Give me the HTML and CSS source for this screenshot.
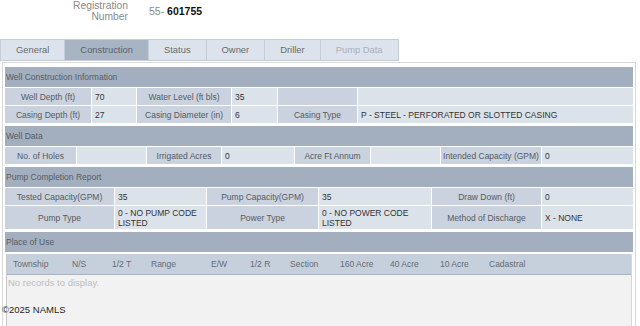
FILE: index.html
```html
<!DOCTYPE html>
<html lang="en">
<head>
    <meta charset="UTF-8">
    <meta name="viewport" content="width=device-width, initial-scale=1.0">
    <title>Well Registration</title>
    <link rel="stylesheet" href="styles.css">
</head>
<body>
    <div class="reg">
        <div class="reg-label">Registration<br>Number</div>
        <div class="reg-value">55- <strong>601755</strong></div>
    </div>

    <!-- Tabs -->
    <div class="tabs">
        <div class="tab">General</div>
        <div class="tab active">Construction</div>
        <div class="tab">Status</div>
        <div class="tab">Owner</div>
        <div class="tab">Driller</div>
        <div class="tab disabled">Pump Data</div>
    </div>

    <div class="panel">
        <div class="section">
            <div class="section-title">Well Construction Information</div>
            <div class="info info-construction">
                <div class="lbl">Well Depth (ft)</div>
                <div class="val">70</div>
                <div class="lbl">Water Level (ft bls)</div>
                <div class="val">35</div>
                <div class="lbl"></div>
                <div class="val"></div>

                <div class="lbl">Casing Depth (ft)</div>
                <div class="val">27</div>
                <div class="lbl">Casing Diameter (in)</div>
                <div class="val">6</div>
                <div class="lbl">Casing Type</div>
                <div class="val">P - STEEL - PERFORATED OR SLOTTED CASING</div>
            </div>
        </div>

        <div class="section">
            <div class="section-title">Well Data</div>
            <div class="info info-well">
                <div class="lbl">No. of Holes</div>
                <div class="val"></div>
                <div class="lbl">Irrigated Acres</div>
                <div class="val">0</div>
                <div class="lbl">Acre Ft Annum</div>
                <div class="val"></div>
                <div class="lbl">Intended Capacity (GPM)</div>
                <div class="val">0</div>
            </div>
        </div>

        <div class="section">
            <div class="section-title">Pump Completion Report</div>
            <div class="info info-pump">
                <div class="lbl">Tested Capacity(GPM)</div>
                <div class="val">35</div>
                <div class="lbl">Pump Capacity(GPM)</div>
                <div class="val">35</div>
                <div class="lbl">Draw Down (ft)</div>
                <div class="val">0</div>

                <div class="lbl">Pump Type</div>
                <div class="val wrap">0 - NO PUMP CODE LISTED</div>
                <div class="lbl">Power Type</div>
                <div class="val wrap">0 - NO POWER CODE LISTED</div>
                <div class="lbl">Method of Discharge</div>
                <div class="val">X - NONE</div>
            </div>
        </div>

        <div class="section last">
            <div class="section-title">Place of Use</div>
            <div class="grid">
                <div class="grid-head">
                    <span>Township</span>
                    <span>N/S</span>
                    <span>1/2 T</span>
                    <span>Range</span>
                    <span>E/W</span>
                    <span>1/2 R</span>
                    <span>Section</span>
                    <span>160 Acre</span>
                    <span>40 Acre</span>
                    <span>10 Acre</span>
                    <span>Cadastral</span>
                </div>
                <div class="grid-body">No records to display.</div>
            </div>
        </div>
    </div>

    <div class="copyright">&copy;2025 NAMLS</div>
</body>
</html>
```

FILE: styles.css
```css
body {
    margin: 0;
    font-family: "Liberation Sans", Arial, sans-serif;
    background: #fff;
    overflow: hidden;
}
.reg {
    display: flex;
    height: 22px;
}
.reg-label {
    width: 128px;
    text-align: right;
    font-size: 10.3px;
    line-height: 11px;
    color: #8a8a8a;
}
.reg-value {
    margin-left: 21px;
    padding-top: 5px;
    font-size: 10.5px;
    line-height: 12px;
    color: #8a8a8a;
}
.reg-value strong {
    color: #111;
}
.tabs {
    display: flex;
    margin-top: 17px;
}
.tab {
    height: 20px;
    line-height: 20px;
    padding: 0 15px;
    font-size: 9.4px;
    color: #6a6a6a;
    background: #dde3ec;
    border: 1px solid #c4ccd7;
    border-left: none;
}
.tab:first-child {
    border-left: 1px solid #c4ccd7;
}
.tab.active {
    background: #a8b4c4;
    color: #59606a;
}
.tab.disabled {
    color: #a9afb8;
}
.panel {
    margin: 1px 4px 0 2px;
    padding: 4px 2px 0 2px;
    border: 1px solid #d8d8d8;
    border-bottom: none;
}
.section {
    margin-bottom: 3px;
}
.section.last {
    margin-bottom: 0;
}
.section-title {
    height: 20px;
    line-height: 20px;
    padding-left: 1px;
    font-size: 8.5px;
    color: #555c66;
    background: #a3afbf;
}
.info {
    display: grid;
    gap: 1px;
    padding-top: 1px;
    background: #fff;
    font-size: 8.5px;
}
.info-construction {
    grid-template-columns: 86px 44px 94px 45px 79px 1fr;
}
.info-well {
    grid-template-columns: 71px 69px 74px 72px 75px 69px 100px 1fr;
}
.info-pump {
    grid-template-columns: 109px 91px 111px 112px 109px 1fr;
}
.lbl,
.val {
    display: flex;
    align-items: center;
    min-height: 17px;
}
.lbl {
    justify-content: center;
    text-align: center;
    background: #c9d2de;
    color: #565b62;
}
.val {
    padding-left: 3px;
    background: #dce2ea;
    color: #333;
}
.val.wrap {
    min-height: 23px;
    line-height: 10px;
}
.grid {
    margin: 2px 1px 0 1px;
    border-left: 1px solid #c9c9c9;
    border-right: 1px solid #d6d6d6;
}
.grid-head {
    display: grid;
    grid-template-columns: 59px 40px 39px 60px 39px 40px 50px 50px 50px 49px 1fr;
    height: 20px;
    line-height: 20px;
    font-size: 8.5px;
    color: #646b74;
    background: #c6d0dc;
    border-bottom: 1px solid #a9b4c2;
}
.grid-head span {
    padding-left: 6px;
}
.grid-body {
    height: 50px;
    padding: 2px 1px 0 1px;
    font-size: 9.5px;
    color: #bdbdbd;
    background: #f2f2f2;
}
.copyright {
    position: absolute;
    left: 2px;
    top: 304px;
    font-size: 9.5px;
    color: #222;
    text-shadow: 0 0 1px #fff;
}
```
